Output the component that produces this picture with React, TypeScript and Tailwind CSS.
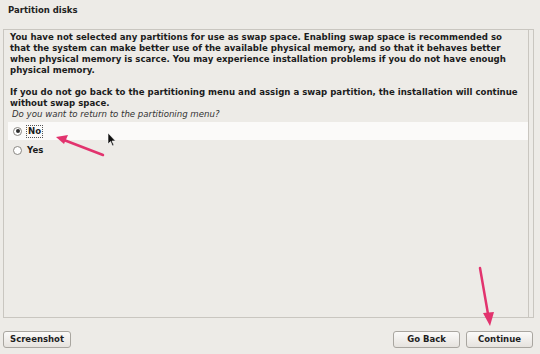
import React from "react";

const font = { fontFamily: '"DejaVu Sans", "Liberation Sans", sans-serif' };

function Radio({ checked }: { checked?: boolean }) {
  return (
    <span className="flex h-[9px] w-[9px] items-center justify-center rounded-full border border-[#8a8782] bg-white">
      {checked && <span className="h-[4px] w-[4px] rounded-full bg-[#2e2e2e]" />}
    </span>
  );
}

function Button({ label, className = "" }: { label: string; className?: string }) {
  return (
    <button
      type="button"
      className={`flex h-[17px] items-center justify-center rounded-[3px] border border-[#a9a6a0] bg-gradient-to-b from-[#fbfaf9] to-[#e6e3de] text-[8.5px] font-bold text-[#1e1e1e] ${className}`}
    >
      {label}
    </button>
  );
}

export default function App() {
  return (
    <div
      className="relative h-[354px] w-[540px] overflow-hidden bg-[#edebe7] text-[#1c1c1c]"
      style={font}
    >
      <div className="flex h-full flex-col px-[3px] pt-[5px]">
        <h1 className="pl-[5px] text-[8.5px] font-bold leading-[11px] text-[#222]">
          Partition disks
        </h1>

        {/* Main panel */}
        <div className="mt-[13px] flex h-[289px] w-[531px] border border-[#c9c6c0] pr-[3px]">
          <div className="flex-1 pt-[2px]">
            <div className="whitespace-nowrap pl-[6px] pr-[8px] text-[8.6px] font-bold leading-[11px]">
              <p>
                You have not selected any partitions for use as swap space. Enabling swap space is recommended so
                <br />
                that the system can make better use of the available physical memory, and so that it behaves better
                <br />
                when physical memory is scarce. You may experience installation problems if you do not have enough
                <br />
                physical memory.
              </p>
              <p className="mt-[11px]">
                If you do not go back to the partitioning menu and assign a swap partition, the installation will continue
                <br />
                without swap space.
              </p>
              <p className="pl-[2px] text-[8.6px] font-normal italic text-[#333]">
                Do you want to return to the partitioning menu?
              </p>
            </div>

            <div className="mt-[2px] pl-[4px]">
              <div className="flex h-[18px] items-center gap-[4px] bg-[#fbfaf9] pl-[5px]">
                <Radio checked />
                <span className="border border-dotted border-[#555] px-[1px] text-[8.6px] font-bold leading-[11px]">
                  No
                </span>
              </div>
              <div className="flex h-[20px] items-center gap-[5px] pl-[5px]">
                <Radio />
                <span className="text-[8.6px] font-bold leading-[11px]">Yes</span>
              </div>
            </div>
          </div>
          <div className="w-[2px] border-l border-[#c9c6c0]" />
        </div>

        {/* Button bar */}
        <div className="mt-[13px] flex w-[530px] items-center">
          <Button label="Screenshot" className="w-[68px]" />
          <div className="flex-1" />
          <Button label="Go Back" className="w-[67px]" />
          <Button label="Continue" className="ml-[6px] w-[67px]" />
        </div>
      </div>

      {/* Annotations */}
      <svg className="pointer-events-none absolute inset-0" width="540" height="354">
        <line x1="103" y1="155" x2="64" y2="140" stroke="#e2336e" strokeWidth="2.5" strokeLinecap="round" />
        <polygon points="56,137 68,135 64,144" fill="#e2336e" />
        <line x1="480" y1="268" x2="488" y2="314" stroke="#e2336e" strokeWidth="2.5" strokeLinecap="round" />
        <polygon points="490,326 483,313 494,312" fill="#e2336e" />
        <path d="M108 133 L108 144 L110.5 141.5 L112.5 146 L114 145.3 L112 141 L115.5 141 Z" fill="#111" stroke="#fff" strokeWidth="0.6" />
      </svg>
    </div>
  );
}
